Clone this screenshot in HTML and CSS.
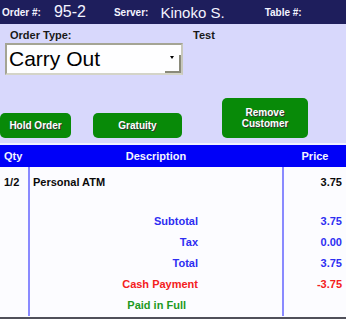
FILE: index.html
```html
<!DOCTYPE html>
<html lang="en">
<head>
    <meta charset="UTF-8">
    <title>Order</title>
    <link rel="stylesheet" href="styles.css">
</head>
<body>
    <div class="screen">
        <div class="topbar">
            <span class="tag order-tag">Order #:</span>
            <span class="big order-no">95-2</span>
            <span class="tag server-tag">Server:</span>
            <span class="big server-name">Kinoko S.</span>
            <span class="tag table-tag">Table #:</span>
        </div>

        <div class="panel">
            <div class="order-row">
                <div class="type-box">
                    <div class="label">Order Type:</div>
                    <div class="combo">
                        <span class="combo-text">Carry Out</span>
                        <span class="combo-btn"><span class="arrow"></span></span>
                    </div>
                </div>
                <div class="test">Test</div>
            </div>
            <div class="actions">
                <div class="button hold">Hold Order</div>
                <div class="button gratuity">Gratuity</div>
                <div class="button remove">Remove<br>Customer</div>
            </div>
        </div>
        <div class="rule"></div>

        <div class="ticket">
            <div class="row head">
                <div class="cell qty">Qty</div>
                <div class="cell desc center">Description</div>
                <div class="cell price center">Price</div>
            </div>
            <div class="row item">
                <div class="cell qty">1/2</div>
                <div class="cell desc">Personal ATM</div>
                <div class="cell price">3.75</div>
            </div>
            <div class="row total blue">
                <div class="cell qty"></div>
                <div class="cell desc">Subtotal</div>
                <div class="cell price">3.75</div>
            </div>
            <div class="row total blue">
                <div class="cell qty"></div>
                <div class="cell desc">Tax</div>
                <div class="cell price">0.00</div>
            </div>
            <div class="row total blue">
                <div class="cell qty"></div>
                <div class="cell desc">Total</div>
                <div class="cell price">3.75</div>
            </div>
            <div class="row total red">
                <div class="cell qty"></div>
                <div class="cell desc">Cash Payment</div>
                <div class="cell price">-3.75</div>
            </div>
            <div class="row total green">
                <div class="cell qty"></div>
                <div class="cell desc paid">Paid in Full</div>
                <div class="cell price"></div>
            </div>
        </div>
    </div>
</body>
</html>
```

FILE: styles.css
```css
* {
    box-sizing: border-box;
}

body {
    margin: 0;
    font-family: "Liberation Sans", Arial, sans-serif;
    background-color: #fcfcff;
}

.screen {
    width: 346px;
    height: 319px;
    display: flex;
    flex-direction: column;
    overflow: hidden;
}

.topbar {
    height: 24px;
    background-color: #1e1e5c;
    color: #f4f4ff;
    display: flex;
    align-items: center;
    padding-left: 2px;
}

.tag {
    font-size: 10px;
    font-weight: bold;
}

.big {
    font-size: 16px;
}

.order-no {
    margin-left: 13px;
}

.server-tag {
    margin-left: 28px;
}

.server-name {
    font-size: 15px;
    margin-left: 12px;
}

.table-tag {
    margin-left: 40px;
}

.panel {
    height: 119px;
    background-color: #d8d8fc;
    display: flex;
    flex-direction: column;
}

.order-row {
    display: flex;
}

.type-box {
    margin-left: 5px;
    width: 178px;
}

.label,
.test {
    font-size: 11px;
    font-weight: bold;
    color: #181818;
    line-height: 12px;
    padding-top: 5px;
}

.label {
    padding-left: 5px;
}

.test {
    margin-left: 10px;
}

.combo {
    margin-top: 2px;
    height: 32px;
    background-color: #fefeff;
    border: 2px solid #a4a494;
    border-right-color: #c8c8bc;
    border-bottom-color: #d4d4c8;
    display: flex;
    align-items: center;
    position: relative;
}

.combo-text {
    font-size: 21px;
    color: #000;
    padding-left: 2px;
}

.combo-btn {
    position: absolute;
    right: 0;
    bottom: 0;
    width: 16px;
    height: 18px;
    border-right: 2px solid #8a8a7a;
    border-bottom: 2px solid #8a8a7a;
}

.arrow {
    position: absolute;
    left: 5px;
    top: 1px;
    width: 0;
    height: 0;
    border-left: 2px solid transparent;
    border-right: 2px solid transparent;
    border-top: 3px solid #000;
}

.actions {
    margin-top: auto;
    padding-bottom: 5px;
    display: flex;
    align-items: flex-end;
}

.button {
    background-color: #088a08;
    color: #fff;
    font-size: 10px;
    font-weight: bold;
    border-radius: 5px;
    display: flex;
    align-items: center;
    justify-content: center;
    text-align: center;
    line-height: 11px;
    text-shadow: 1px 1px 0 #333;
}

.hold {
    width: 71px;
    height: 25px;
}

.gratuity {
    width: 89px;
    height: 25px;
    margin-left: 22px;
}

.remove {
    width: 86px;
    height: 40px;
    margin-left: 40px;
}

.rule {
    height: 2px;
    background-color: #f2f2ff;
}

.ticket {
    flex: 1;
    display: flex;
    flex-direction: column;
    border-bottom: 2px solid #50505a;
}

.row {
    display: flex;
    font-size: 11px;
    font-weight: bold;
}

.cell {
    padding: 0 4px;
}

.qty {
    width: 30px;
    border-right: 2px solid #8a8aff;
}

.desc {
    width: 254px;
    border-right: 2px solid #8a8aff;
}

.price {
    flex: 1;
    text-align: right;
}

.head {
    height: 22px;
    background-color: #0000f8;
    color: #f4f4ff;
    align-items: center;
}

.head .cell {
    border-right-color: transparent;
    line-height: 22px;
}

.center {
    text-align: center !important;
}

.item {
    height: 44px;
    color: #0a0a0a;
}

.item .cell {
    padding-top: 5px;
    line-height: 20px;
}

.item .desc {
    padding-left: 3px;
}

.total {
    height: 21px;
    line-height: 21px;
}

.total .desc {
    text-align: right;
    padding-right: 84px;
}

.total .paid {
    padding-right: 96px;
}

.blue {
    color: #2e2ef2;
}

.red {
    color: #f42020;
}

.green {
    color: #1e9a1e;
}
```
